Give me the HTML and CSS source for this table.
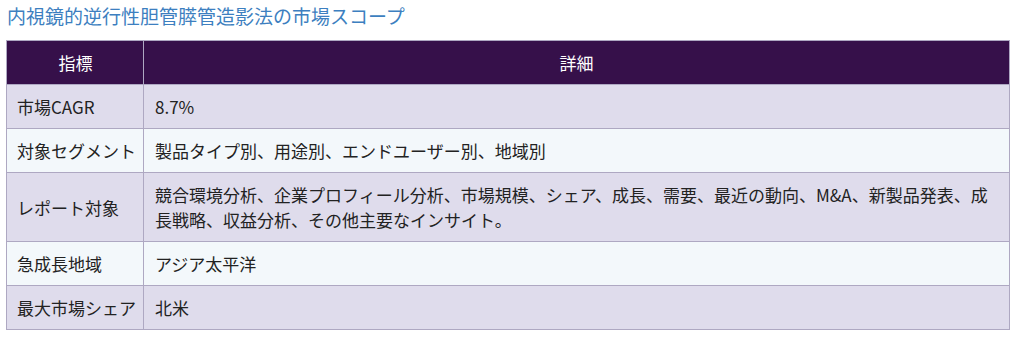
FILE: index.html
```html
<!DOCTYPE html>
<html lang="ja">
<head>
<meta charset="utf-8">
<link rel="stylesheet" href="styles.css">
</head>
<body>
<h2 class="title">内視鏡的逆行性胆管膵管造影法の市場スコープ</h2>
<table class="scope">
  <thead>
    <tr><th class="col-key">指標</th><th>詳細</th></tr>
  </thead>
  <tbody>
    <tr><td class="key">市場CAGR</td><td>8.7%</td></tr>
    <tr><td class="key">対象セグメント</td><td>製品タイプ別、用途別、エンドユーザー別、地域別</td></tr>
    <tr><td class="key">レポート対象</td><td>競合環境分析、企業プロフィール分析、市場規模、シェア、成長、需要、最近の動向、M&amp;A、新製品発表、成長戦略、収益分析、その他主要なインサイト。</td></tr>
    <tr><td class="key">急成長地域</td><td>アジア太平洋</td></tr>
    <tr><td class="key">最大市場シェア</td><td>北米</td></tr>
  </tbody>
</table>
</body>
</html>
```
FILE: styles.css
```css
body {
  margin: 0;
  padding: 0 6px;
  font-family: "Noto Sans CJK JP", "Noto Sans", sans-serif;
  color: #222;
  background: #fff;
}
.title {
  margin: 0;
  padding: 3px 0 0 1px;
  height: 40px;
  box-sizing: border-box;
  font-size: 19px;
  font-weight: normal;
  line-height: 26px;
  color: #3d7fc0;
}
.scope {
  width: 1004px;
  border-collapse: collapse;
  font-size: 17px;
  line-height: 25px;
}
.scope th,
.scope td {
  border: 1px solid #aea8c2;
  padding: 9px 11px;
  text-align: left;
  vertical-align: middle;
}
.scope th {
  background: #36104a;
  color: #fff;
  font-weight: normal;
  text-align: center;
}
.scope .col-key {
  width: 121px;
  padding-left: 8px;
  padding-right: 7px;
}
.scope .key {
  white-space: nowrap;
  padding-left: 10px;
  padding-right: 6px;
}
.scope tbody tr:nth-child(odd) td {
  background: #dfdcec;
}
.scope tbody tr:nth-child(even) td {
  background: #f3f8fb;
}
```
